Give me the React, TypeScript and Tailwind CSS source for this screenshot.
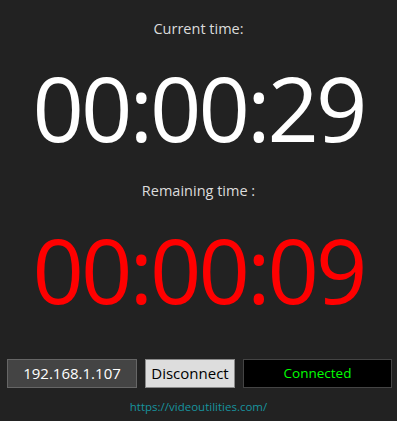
import React from 'react';

const font = { fontFamily: '"Open Sans", "Noto Sans", sans-serif' };

export default function App() {
  return (
    <div className="w-[397px] h-[421px] bg-[#222222] flex flex-col items-center overflow-hidden" style={font}>
      <div className="mt-[19px] text-[14.5px] leading-[20px] text-[#dcdcdc]">Current time:</div>
      <div className="mt-[18px] text-[90px] leading-[100px] text-white tracking-[-3px]">00:00:29</div>
      <div className="mt-[24px] text-[14.5px] leading-[20px] text-[#dcdcdc]">Remaining time :</div>
      <div className="mt-[18px] text-[90px] leading-[100px] text-[#ff0000] tracking-[-3px]">00:00:09</div>
      <div className="mt-[40px] w-full flex items-center gap-[8px] pl-[7px] pr-[5px]">
        <div className="w-[130px] h-[29px] bg-[#444444] border border-[#666666] flex items-center justify-center text-[15px] text-white">
          192.168.1.107
        </div>
        <button className="w-[90px] h-[29px] bg-[#dddddd] border border-[#8a8a8a] flex items-center justify-center text-[15px] text-black">
          Disconnect
        </button>
        <div className="flex-1 h-[29px] bg-black border border-[#444444] flex items-center justify-center text-[13.5px] text-[#00ff00]">
          Connected
        </div>
      </div>
      <div className="mt-[11px] text-[11.5px] leading-[16px] text-[#17939f]">https://videoutilities.com/</div>
    </div>
  );
}
